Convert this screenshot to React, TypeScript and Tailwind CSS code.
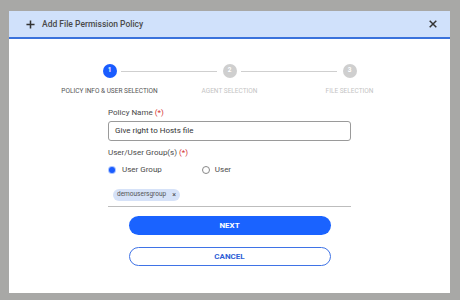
import React from "react";

const font = { fontFamily: "Roboto, 'Liberation Sans', sans-serif" };

function Step({ n, label, active }: { n: number; label: string; active?: boolean }) {
  return (
    <div className="flex flex-col items-center w-[120px]">
      <div
        className={
          "w-[14px] h-[14px] rounded-full flex items-center justify-center text-[6.5px] font-bold text-white " +
          (active ? "bg-[#1a5cff]" : "bg-[#cfcfcf]")
        }
      >
        {n}
      </div>
      <div className={"mt-[9px] text-[6.5px] leading-[8px] whitespace-nowrap " + (active ? "text-[#555]" : "text-[#c4c4c4]")}>
        {label}
      </div>
    </div>
  );
}

export default function App() {
  return (
    <div style={font} className="w-[460px] h-[300px] bg-[#a8a8a6] pt-[11px] pl-[9px] overflow-hidden">
      <div className="w-[441px] h-[282px] bg-white flex flex-col">
        <div className="h-[28px] bg-[#d0e1fb] border-b-2 border-[#3a72dc] flex items-center pl-[17px] pr-[13px]">
          <svg width="9" height="9" viewBox="0 0 10 10" className="mr-[7px]">
            <path d="M5 0.5V9.5M0.5 5H9.5" stroke="#333" strokeWidth="1.7" />
          </svg>
          <span className="text-[8.5px] text-[#4a4a4a] font-medium">Add File Permission Policy</span>
          <svg width="8" height="8" viewBox="0 0 8 8" className="ml-auto">
            <path d="M0.7 0.7L7.3 7.3M7.3 0.7L0.7 7.3" stroke="#333" strokeWidth="1.5" />
          </svg>
        </div>
        <div className="relative flex justify-center mt-[25px]">
          <div className="absolute top-[6.5px] left-[112px] w-[96px] h-px bg-[#cfcfcf]" />
          <div className="absolute top-[6.5px] left-[232px] w-[96px] h-px bg-[#cfcfcf]" />
          <Step n={1} label="POLICY INFO & USER SELECTION" active />
          <Step n={2} label="AGENT SELECTION" />
          <Step n={3} label="FILE SELECTION" />
        </div>
        <div className="w-[243px] mx-auto mt-[13px] flex flex-col">
          <div className="text-[8px] leading-[10px] text-[#4a4a4a]">
            Policy Name <span className="text-[#d32f2f]">(*)</span>
          </div>
          <div className="mt-[3px] h-[20px] border border-[#9a9a9a] rounded-[3px] flex items-center pl-[6px] text-[8px] text-[#333]">
            Give right to Hosts file
          </div>
          <div className="mt-[7px] text-[8px] leading-[10px] text-[#4a4a4a]">
            User/User Group(s) <span className="text-[#d32f2f]">(*)</span>
          </div>
          <div className="mt-[6px] h-[12px] flex items-center text-[8px] text-[#4a4a4a]">
            <div className="w-[6px] h-[6px] ml-[1px] rounded-full bg-[#1a5cff] ring-1 ring-[#a9c4ff]" />
            <span className="ml-[7px]">User Group</span>
            <div className="w-[8px] h-[8px] ml-[40px] rounded-full border border-[#888]" />
            <span className="ml-[5px]">User</span>
          </div>
          <div className="mt-[13px] ml-[5px] self-start h-[12px] px-[4px] rounded-full bg-[#d6e2f8] flex items-center text-[6.5px] text-[#555]">
            demousersgroup
            <span className="ml-[6px] text-[7px] text-[#444]">×</span>
          </div>
          <div className="mt-[5px] h-px bg-[#bdbdbd]" />
        </div>
        <div className="w-[202px] mx-auto mt-[9px] flex flex-col">
          <div className="h-[19px] rounded-full bg-[#1a63ff] flex items-center justify-center text-white text-[8px] font-bold">
            NEXT
          </div>
          <div className="mt-[12px] h-[19px] rounded-full border border-[#3f73e6] flex items-center justify-center text-[#2f5fd6] text-[8px] font-bold">
            CANCEL
          </div>
        </div>
      </div>
    </div>
  );
}
